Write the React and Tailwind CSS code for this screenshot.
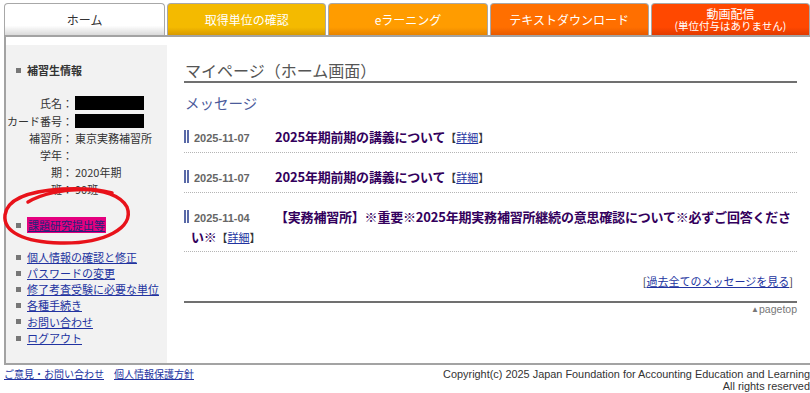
import React from 'react';

const jp = "font-['Noto_Sans_CJK_JP',sans-serif]";

const tabs = [
  { label: '取得単位の確認', cls: 'from-[#f4ba00] from-75% to-[#d89a00]' },
  { label: 'eラーニング', cls: 'from-[#ff9c00] from-75% to-[#e88400]' },
  { label: 'テキストダウンロード', cls: 'from-[#ff6f00] from-75% to-[#e85a00]' },
];

const links = [
  '個人情報の確認と修正',
  'パスワードの変更',
  '修了考査受験に必要な単位',
  '各種手続き',
  'お問い合わせ',
  'ログアウト',
];

const info = [
  ['氏名', null, 'box'],
  ['カード番号', null, 'box'],
  ['補習所', '東京実務補習所'],
  ['学年', ''],
  ['期', '2020年期'],
  ['班', '90班'],
];

const messages = [
  { date: '2025-11-07', title: '2025年期前期の講義について' },
  { date: '2025-11-07', title: '2025年期前期の講義について' },
  { date: '2025-11-04', title: '【実務補習所】※重要※2025年期実務補習所継続の意思確認について※必ずご回答ください※' },
];

const Bullet = () => <span className="inline-block w-[5px] h-[5px] bg-[#777] mr-[6px] shrink-0" />;

export default function App() {
  return (
    <div className={`relative w-[810px] h-[393px] overflow-hidden bg-white text-[#333] ${jp}`}>
      {/* tabs */}
      <div className="flex gap-[2px] pt-[3px] pl-[4px] h-[35px]">
        <div className="w-[162px] h-[32px] rounded-t-[4px] border border-b-0 border-[#a8a8a8] bg-linear-to-b from-white from-70% to-[#dadada] flex items-center justify-center text-[12px] text-[#333]">
          ホーム
        </div>
        {tabs.map(t => (
          <div key={t.label} className={`w-[160px] h-[32px] rounded-t-[4px] border border-b-0 border-[#a8a8a8] bg-linear-to-b ${t.cls} flex items-center justify-center text-[12px] text-white`}>
            {t.label}
          </div>
        ))}
        <div className="w-[160px] h-[32px] rounded-t-[4px] border border-b-0 border-[#a8a8a8] bg-linear-to-b from-[#ff4800] from-75% to-[#e23a00] flex flex-col items-center justify-center text-white leading-[12px]">
          <span className="text-[12px]">動画配信</span>
          <span className="text-[10.5px]">(単位付与はありません)</span>
        </div>
      </div>

      {/* main box */}
      <div className="flex border-t-2 border-l-2 border-b-2 border-[#a3a3a3] ml-[4px]">
        <aside className="w-[161px] mt-[8px] bg-[#f2f2f2] pt-[17px] pb-[17px] text-[11px]">
          <div className="flex items-center pl-[10px] leading-[16px] font-bold">
            <Bullet />補習生情報
          </div>
          <div className="mt-[17px]">
            {info.map(([k, v, box], i) => (
              <div key={k} className={`grid grid-cols-[67px_1fr] gap-[2px] leading-[17px] ${i === 0 ? 'mb-[1px]' : ''}`}>
                <span className="text-right">{k}：</span>
                {box ? <span className="block w-[69px] h-[14px] bg-black mt-[1px]" /> : <span>{v}</span>}
              </div>
            ))}
          </div>
          <div className="mt-[19px] flex items-center pl-[10px] leading-[16px]">
            <Bullet />
            <span className="bg-[#e4007f] px-[1px] text-[#23237a] underline">課題研究提出等</span>
          </div>
          <div className="mt-[16px]">
            {links.map(l => (
              <div key={l} className="flex items-center pl-[10px] h-[16.2px]">
                <Bullet />
                <span className="text-[#2233a0] underline">{l}</span>
              </div>
            ))}
          </div>
        </aside>

        <main className="flex-1 pl-[17px] pr-[13px] pt-[22px]">
          <h1 className="text-[16px] leading-[22px] text-[#555] pl-[1px] border-b-2 border-[#707070]">マイページ（ホーム画面）</h1>
          <h2 className="mt-[9px] text-[14.5px] leading-[21px] text-[#4b5b9b] pl-[1px]">メッセージ</h2>
          {messages.map((m, i) => (
            <div key={i} className="pl-[7px] pt-[14px] pb-[5px] leading-[17px] border-b border-dotted border-[#b5b5b5]">
              <span className="inline-block -ml-[7px] w-[5px] h-[13px] border-l-2 border-r-2 border-[#5a6aa8] align-[-1px]" />
              <span className="inline-block w-[86px] pl-[5px] font-['Liberation_Sans',sans-serif] font-bold text-[11px] text-[#666]">{m.date}</span>
              <span className="text-[13px] font-bold tracking-[-0.2px] text-[#33005c]">{m.title}</span>
              <span className="text-[11px] text-[#333]">【<span className="text-[#2233a0] underline">詳細</span>】</span>
            </div>
          ))}
          <div className="mt-[21px] text-right text-[11px] leading-[16px] pr-[4px]">
            [<span className="text-[#2233a0] underline">過去全てのメッセージを見る</span>]
          </div>
          <div className="mt-[12px] border-t-2 border-[#707070] text-right text-[10.5px] leading-[12px] text-[#777] font-['Liberation_Sans',sans-serif]">
            <span className="text-[8px] align-[1px]">▲</span>pagetop
          </div>
        </main>
      </div>

      {/* footer */}
      <div className="flex justify-between pl-[4px] pt-[3px] leading-[12px]">
        <div className="flex gap-[10px] text-[10px]">
          <span className="text-[#2233a0] underline">ご意見・お問い合わせ</span>
          <span className="text-[#2233a0] underline">個人情報保護方針</span>
        </div>
        <div className="text-right font-['Liberation_Sans',sans-serif] text-[10.9px] text-[#333]">
          <div>Copyright(c) 2025 Japan Foundation for Accounting Education and Learning</div>
          <div>All rights reserved</div>
        </div>
      </div>

      {/* hand-drawn annotation */}
      <svg className="absolute left-0 top-0 pointer-events-none" width="810" height="393">
        <path d="M28 202 C55 186 114 183 127 207 C135 228 104 244 60 243 C24 242 3 232 5 215 C7 199 30 191 62 189 C82 188 98 189 112 193"
          fill="none" stroke="#e8121a" strokeWidth="3.5" strokeLinecap="round" />
      </svg>
    </div>
  );
}
